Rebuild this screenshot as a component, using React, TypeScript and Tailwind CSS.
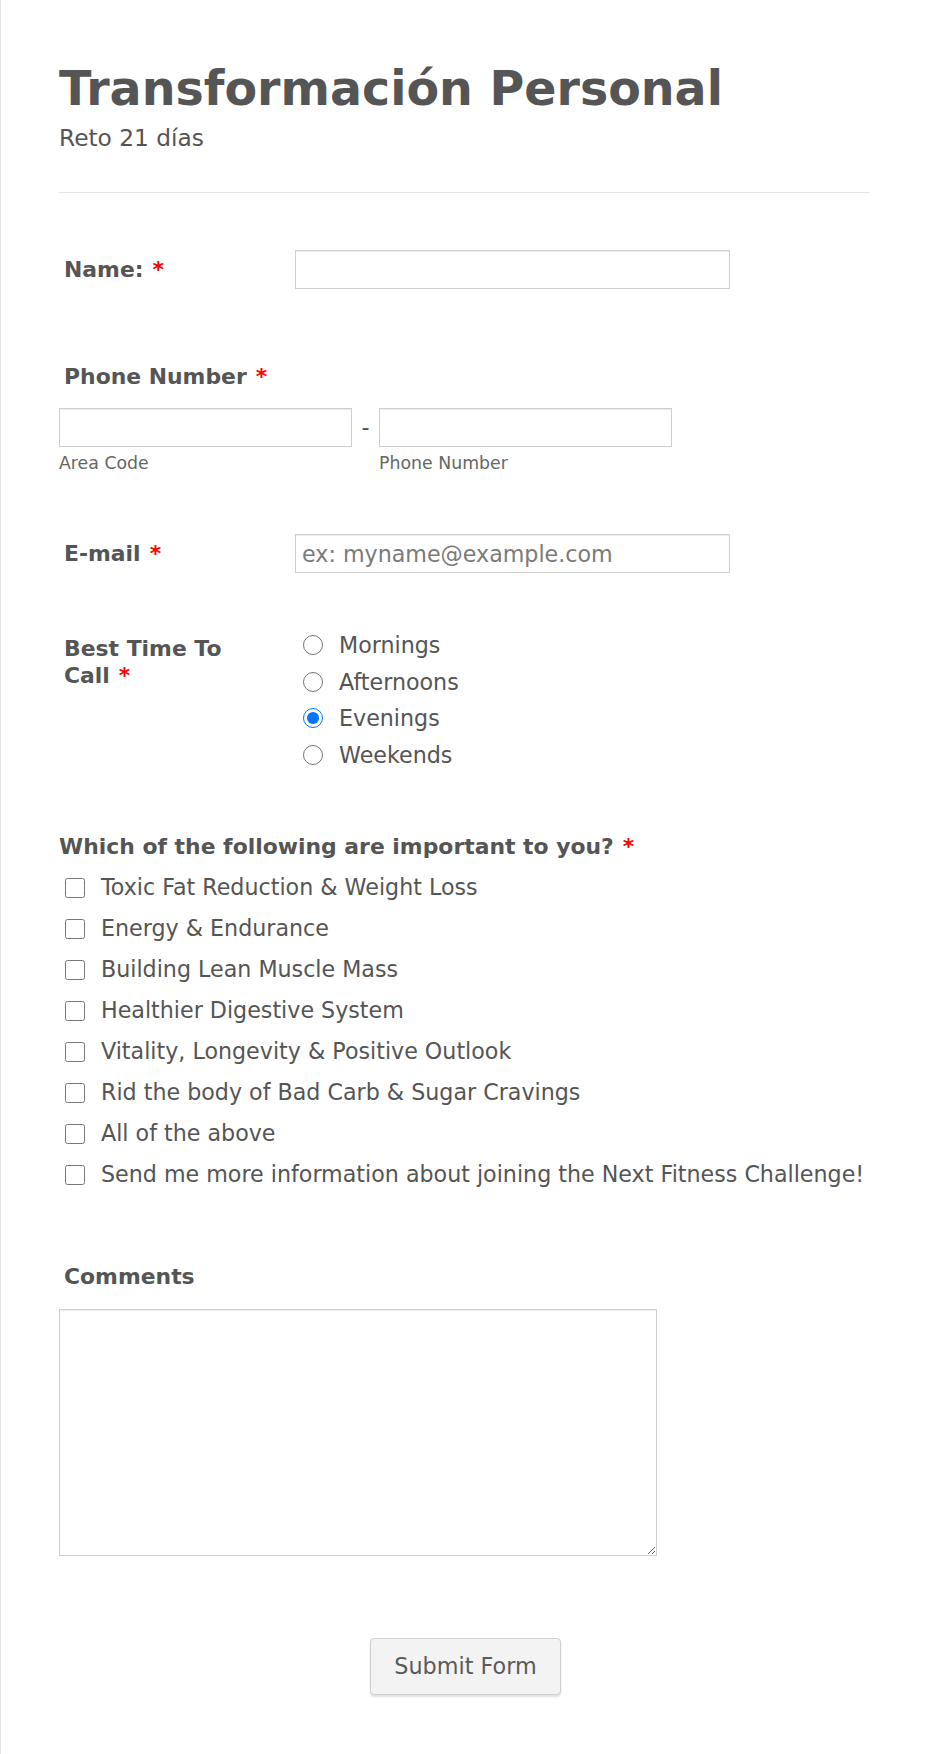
import React from "react";

const Req = () => <span className="text-[#ff0000] ml-[9px]">*</span>;

const inputCls =
  "block bg-white border border-[#cfcfcf] shadow-[inset_0_1px_1px_rgba(0,0,0,0.08)] outline-none px-[8px] text-[22.2px] text-[#555] placeholder:text-[#7a7a7a] font-['DejaVu_Sans',sans-serif]";

const options = [
  "Toxic Fat Reduction & Weight Loss",
  "Energy & Endurance",
  "Building Lean Muscle Mass",
  "Healthier Digestive System",
  "Vitality, Longevity & Positive Outlook",
  "Rid the body of Bad Carb & Sugar Cravings",
  "All of the above",
  "Send me more information about joining the Next Fitness Challenge!",
];

const times = ["Mornings", "Afternoons", "Evenings", "Weekends"];

export default function App() {
  return (
    <div className="min-h-[1754px] bg-white border-l border-[#e3e3e3] font-['DejaVu_Sans',sans-serif] text-[#555]">
      <div className="pl-[58px] pr-[60px] pt-[61px] pb-[57px]">
        {/* Header */}
        <h1 className="text-[47.5px] leading-[56px] font-bold text-[#555]">Transformación Personal</h1>
        <div className="mt-[7px] text-[23.3px] leading-[28px] text-[#555]">Reto 21 días</div>
        <div className="mt-[40px] border-t border-[#e6e6e6]" />

        {/* Name */}
        <div className="mt-[57px] flex items-center">
          <label className="w-[236px] pl-[5px] text-[21.9px] leading-[28px] font-bold">
            Name:<Req />
          </label>
          <input type="text" className={`${inputCls} w-[435px] h-[39px]`} />
        </div>

        {/* Phone */}
        <div className="mt-[74px] pl-[5px] text-[21.9px] leading-[28px] font-bold">
          Phone Number<Req />
        </div>
        <div className="mt-[17px] flex items-start">
          <div className="flex flex-col">
            <input type="text" className={`${inputCls} w-[293px] h-[39px]`} />
            <span className="mt-[6px] text-[17.33px] leading-[20px] text-[#666]">Area Code</span>
          </div>
          <span className="w-[27px] h-[39px] flex items-center justify-center text-[22.2px]">-</span>
          <div className="flex flex-col">
            <input type="text" className={`${inputCls} w-[293px] h-[39px]`} />
            <span className="mt-[6px] text-[17.33px] leading-[20px] text-[#666]">Phone Number</span>
          </div>
        </div>

        {/* Email */}
        <div className="mt-[61px] flex items-center">
          <label className="w-[236px] pl-[5px] text-[21.9px] leading-[28px] font-bold">
            E-mail<Req />
          </label>
          <input
            type="email"
            placeholder="ex: myname@example.com"
            className={`${inputCls} w-[435px] h-[39px] pl-[6px]`}
          />
        </div>

        {/* Best time */}
        <div className="mt-[54px] flex items-start">
          <label className="w-[236px] pl-[5px] pr-[30px] pt-[8px] text-[21.9px] leading-[27.3px] font-bold">
            Best Time To Call<Req />
          </label>
          <div className="flex flex-col pl-[8px]">
            {times.map((t) => (
              <label key={t} className="flex items-center h-[36.6px] text-[22.2px] leading-[36.6px]">
                <input
                  type="radio"
                  name="time"
                  defaultChecked={t === "Evenings"}
                  className="w-[20px] h-[20px] m-0"
                />
                <span className="ml-[16px]">{t}</span>
              </label>
            ))}
          </div>
        </div>

        {/* Important */}
        <div className="mt-[60px] text-[21.9px] leading-[28px] font-bold">
          Which of the following are important to you?<Req />
        </div>
        <div className="mt-[6px] flex flex-col">
          {options.map((o) => (
            <label key={o} className="flex items-center h-[41px] text-[22.2px] leading-[41px] whitespace-nowrap">
              <input type="checkbox" className="w-[20px] h-[20px] ml-[6px] m-0 shrink-0" />
              <span className="ml-[16px]">{o}</span>
            </label>
          ))}
        </div>

        {/* Comments */}
        <div className="mt-[68px] pl-[5px] text-[21.9px] leading-[28px] font-bold">Comments</div>
        <textarea
          className="mt-[18px] block w-[598px] h-[247px] bg-white border border-[#cfcfcf] shadow-[inset_0_1px_1px_rgba(0,0,0,0.08)] outline-none p-[6px] text-[22.2px] text-[#555] font-['DejaVu_Sans',sans-serif]"
        />

        {/* Submit */}
        <div className="mt-[82px] flex justify-center">
          <button
            type="button"
            className="relative left-[1px] w-[191px] h-[57px] bg-[#f3f3f3] border border-[#cfcfcf] rounded-[4px] shadow-[0_2px_2px_rgba(0,0,0,0.12)] text-[22.3px] text-[#5a5a5a] font-['DejaVu_Sans',sans-serif]"
          >
            Submit Form
          </button>
        </div>
      </div>
    </div>
  );
}
